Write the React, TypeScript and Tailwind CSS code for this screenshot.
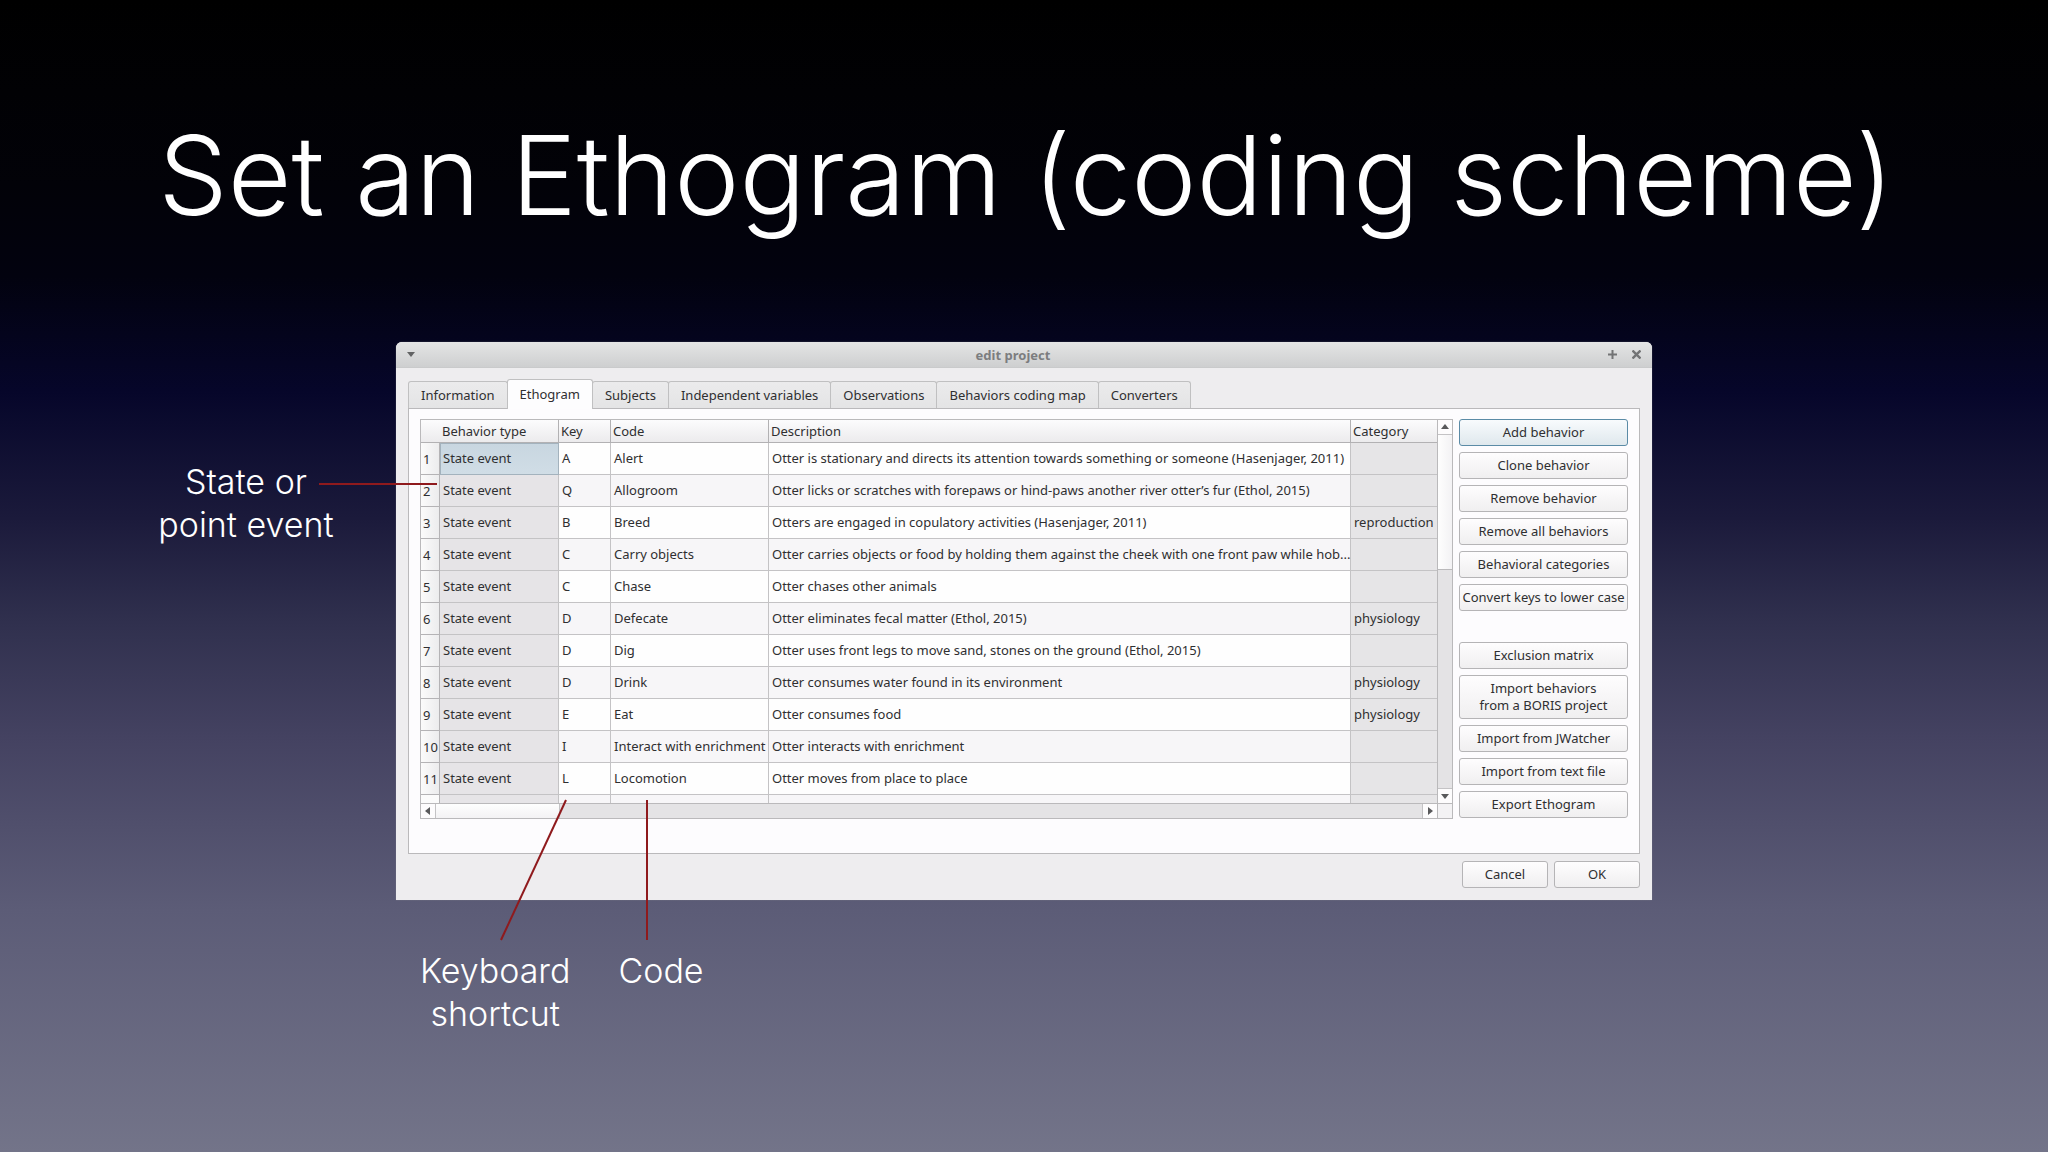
import React from "react";

type Row = { key: string; code: string; description: string; category?: string };

const rows: Row[] = [
  { key: "A", code: "Alert", description: "Otter is stationary and directs its attention towards something or someone (Hasenjager, 2011)" },
  { key: "Q", code: "Allogroom", description: "Otter licks or scratches with forepaws or hind-paws another river otter’s fur (Ethol, 2015)" },
  { key: "B", code: "Breed", description: "Otters are engaged in copulatory activities (Hasenjager, 2011)", category: "reproduction" },
  { key: "C", code: "Carry objects", description: "Otter carries objects or food by holding them against the cheek with one front paw while hob..." },
  { key: "C", code: "Chase", description: "Otter chases other animals" },
  { key: "D", code: "Defecate", description: "Otter eliminates fecal matter (Ethol, 2015)", category: "physiology" },
  { key: "D", code: "Dig", description: "Otter uses front legs to move sand, stones on the ground (Ethol, 2015)" },
  { key: "D", code: "Drink", description: "Otter consumes water found in its environment", category: "physiology" },
  { key: "E", code: "Eat", description: "Otter consumes food", category: "physiology" },
  { key: "I", code: "Interact with enrichment", description: "Otter interacts with enrichment" },
  { key: "L", code: "Locomotion", description: "Otter moves from place to place" },
];

const tabs = ["Information", "Ethogram", "Subjects", "Independent variables", "Observations", "Behaviors coding map", "Converters"];

const editActions = ["Add behavior", "Clone behavior", "Remove behavior", "Remove all behaviors", "Behavioral categories", "Convert keys to lower case"];
const transferActions = ["Exclusion matrix", "Import behaviors\nfrom a BORIS project", "Import from JWatcher", "Import from text file", "Export Ethogram"];

function PushButton({ label, focused = false, className = "" }: { label: string; focused?: boolean; className?: string }) {
  const tone = focused
    ? "border-[#5b8ba6] bg-linear-to-b from-[#f8fbfd] to-[#dfe8ed]"
    : "border-[#b5b4b6] bg-linear-to-b from-[#fefdfe] to-[#f0eff0]";
  return (
    <button
      type="button"
      className={`flex items-center justify-center rounded-[3px] border py-1 text-center leading-[17px] whitespace-pre text-[#2f2f31] ${tone} ${className}`}
    >
      {label}
    </button>
  );
}

function Arrow({ direction }: { direction: "up" | "down" | "left" | "right" }) {
  const points = {
    up: "0,6 4,1 8,6",
    down: "0,2 8,2 4,7",
    left: "6,0 6,8 1,4",
    right: "2,0 7,4 2,8",
  };
  return (
    <svg viewBox="0 0 8 8" className="size-2 fill-[#59595b]" aria-hidden="true">
      <polygon points={points[direction]} />
    </svg>
  );
}

function TitleBar() {
  return (
    <header className="flex h-[26px] items-center justify-between rounded-t-md border-b border-[#c9cacb] bg-linear-to-b from-[#e4e5e5] to-[#cecfd0] px-[11px]">
      <button type="button" aria-label="Window menu" className="flex w-10 items-center">
        <svg viewBox="0 0 8 5" className="h-[5px] w-2 fill-[#626364]" aria-hidden="true">
          <polygon points="0,0 8,0 4,5" />
        </svg>
      </button>
      <h2 className="pr-[22px] font-bold text-[#7c7d7f]">edit project</h2>
      <div className="flex w-10 items-center justify-end gap-[15px]">
        <button type="button" aria-label="Maximize">
          <svg viewBox="0 0 9 9" className="size-[9px]" fill="none" stroke="#737475" strokeWidth="2" aria-hidden="true">
            <path d="M4.500 0V9M0 4.500H9" />
          </svg>
        </button>
        <button type="button" aria-label="Close">
          <svg viewBox="0 0 9 9" className="size-[9px]" fill="none" stroke="#737475" strokeWidth="2.400" aria-hidden="true">
            <path d="M0.500 0.500L8.500 8.500M8.500 0.500L0.500 8.500" />
          </svg>
        </button>
      </div>
    </header>
  );
}

function TabStrip() {
  return (
    <div role="tablist" className="flex items-end">
      {tabs.map((tab, i) =>
        tab === "Ethogram" ? (
          <button
            key={tab}
            type="button"
            role="tab"
            aria-selected="true"
            className="relative z-10 -mb-px -ml-px h-[30px] rounded-t-[3px] border border-b-0 border-[#c0c0c1] bg-[#fdfdfe] px-3 pb-[2px]"
          >
            {tab}
          </button>
        ) : (
          <button
            key={tab}
            type="button"
            role="tab"
            aria-selected="false"
            className={`h-[27px] rounded-t-[3px] border border-b-0 border-[#c0c0c1] bg-linear-to-b from-[#ebebec] to-[#e4e4e5] px-3 ${i > 0 ? "-ml-px" : ""}`}
          >
            {tab}
          </button>
        ),
      )}
    </div>
  );
}

const line = "border-r border-b border-[#c4c3c5]";

function EthogramTable() {
  return (
    <div className="grid min-w-0 flex-1 grid-cols-[minmax(0,1fr)_15px] grid-rows-[383px_15px] border border-[#bab9bb]">
      <div className="overflow-hidden">
        <table className="w-full table-fixed border-separate border-spacing-0 text-left">
          <colgroup>
            <col className="w-[19px]" />
            <col className="w-[119px]" />
            <col className="w-[52px]" />
            <col className="w-[158px]" />
            <col />
            <col className="w-[86px]" />
          </colgroup>
          <thead>
            <tr className="h-[23px] bg-linear-to-b from-[#fcfcfd] to-[#ebeaec]">
              <th className="border-b border-[#b2b1b3]" aria-label="Row" />
              <th className="border-r border-b border-[#b2b1b3] pl-[2px] font-normal">Behavior type</th>
              <th className="border-r border-b border-[#b2b1b3] pl-[2px] font-normal">Key</th>
              <th className="border-r border-b border-[#b2b1b3] pl-[2px] font-normal">Code</th>
              <th className="border-r border-b border-[#b2b1b3] pl-[2px] font-normal">Description</th>
              <th className="border-b border-[#b2b1b3] pl-[2px] font-normal">Category</th>
            </tr>
          </thead>
          <tbody>
            {rows.map((row, i) => (
              <tr key={i} className="h-8 whitespace-nowrap odd:bg-[#fefefe] even:bg-[#f7f6f8]">
                <th scope="row" className="border-r border-b border-[#b4b3b5] bg-linear-to-r from-[#fbfbfb] to-[#ececed] pl-[2px] font-normal">
                  {i + 1}
                </th>
                <td className={`${line} pb-[2px] pl-[3px] ${i === 0 ? "bg-linear-to-b from-[#c8d6e0] to-[#d0dde6] outline -outline-offset-1 outline-[#a3b2bd]" : "bg-[#e6e4e7]"}`}>State event</td>
                <td className={`${line} pb-[2px] pl-[3px]`}>{row.key}</td>
                <td className={`${line} pb-[2px] pl-[3px]`}>{row.code}</td>
                <td className={`${line} pb-[2px] pl-[3px]`}>{row.description}</td>
                <td className="border-b border-[#c4c3c5] bg-[#e6e5e7] pb-[2px] pl-[3px]">{row.category}</td>
              </tr>
            ))}
            <tr className="h-8 bg-[#f7f6f8]">
              <th scope="row" aria-label="12" className="border-r border-[#b4b3b5] bg-[#fbfbfb]" />
              <td className={`${line} bg-[#e6e4e7]`} />
              <td className={line} />
              <td className={line} />
              <td className={line} />
              <td className="bg-[#e6e5e7]" />
            </tr>
          </tbody>
        </table>
      </div>
      <div className="flex flex-col border-l border-[#bab9bb] bg-[#e4e3e5]">
        <button type="button" aria-label="Scroll up" className="flex h-[15px] items-center justify-center border-b border-[#c4c3c5] bg-[#fdfcfd]">
          <Arrow direction="up" />
        </button>
        <div className="h-[135px] border-b border-[#bab9bb] bg-linear-to-r from-[#fefefe] to-[#f3f2f4]" />
        <div className="flex-1" />
        <button type="button" aria-label="Scroll down" className="flex h-[15px] items-center justify-center border-t border-[#c4c3c5] bg-[#fdfcfd]">
          <Arrow direction="down" />
        </button>
      </div>
      <div className="flex border-t border-[#bab9bb] bg-[#e4e3e5]">
        <button type="button" aria-label="Scroll left" className="flex w-[15px] items-center justify-center border-r border-[#c4c3c5] bg-[#fdfcfd]">
          <Arrow direction="left" />
        </button>
        <div className="w-[124px] border-r border-[#c4c3c5] bg-linear-to-b from-[#fefefe] to-[#f3f2f4]" />
        <div className="flex-1" />
        <button type="button" aria-label="Scroll right" className="flex w-[15px] items-center justify-center border-l border-[#c4c3c5] bg-[#fdfcfd]">
          <Arrow direction="right" />
        </button>
      </div>
      <div className="border-t border-l border-[#bab9bb] bg-[#f3f2f4]" />
    </div>
  );
}

function ProjectWindow() {
  return (
    <section
      aria-label="edit project"
      className="rounded-t-md bg-[#eeedef] text-[13px] leading-[18px] font-normal text-[#2f2f31] shadow-[0_0_1px_#a0a0a2] [font-family:'Noto_Sans',sans-serif]"
    >
      <TitleBar />
      <div className="px-3 pt-[11px] pb-3">
        <TabStrip />
        <div role="tabpanel" className="flex items-start gap-1.5 border border-[#bab9bb] bg-[#fdfcfe] pt-2.5 pr-[11px] pb-[34px] pl-[11px]">
          <EthogramTable />
          <div className="flex w-[169px] flex-col gap-1.5">
            {editActions.map((label) => (
              <PushButton key={label} label={label} focused={label === "Add behavior"} />
            ))}
            <div className="h-[19px]" />
            {transferActions.map((label) => (
              <PushButton key={label} label={label} />
            ))}
          </div>
        </div>
        <footer className="flex justify-end gap-1.5 pt-[7px]">
          <PushButton label="Cancel" className="w-[86px]" />
          <PushButton label="OK" className="w-[86px]" />
        </footer>
      </div>
    </section>
  );
}

export default function App() {
  return (
    <main className="min-h-screen overflow-hidden bg-[linear-gradient(to_bottom,#000000_0%,#020208_16%,#02020f_24%,#06062a_34%,#1b1a3b_45%,#30304e_54%,#444261_64%,#5c5c77_79%,#737489_100%)] text-white [font-family:Inter,sans-serif]">
      <h1 className="pt-[107px] pl-1 text-center text-[110px] leading-[136px] font-light whitespace-nowrap">Set an Ethogram (coding scheme)</h1>
      <div className="mt-[99px] grid grid-cols-[1fr_minmax(0,1256px)_1fr] text-[34px] leading-[43px] font-light">
        <p className="pt-[118px] pl-24 text-center">
          State or
          <br />
          point event
        </p>
        <div className="relative">
          <ProjectWindow />
          <div className="flex items-start gap-12 pt-[49px] pl-6">
            <p className="text-center">
              Keyboard
              <br />
              shortcut
            </p>
            <p>Code</p>
          </div>
          <svg className="pointer-events-none absolute top-0 left-0 h-full w-full overflow-visible" stroke="#8f1a1d" strokeWidth="2" aria-hidden="true">
            <line x1="-77" y1="142" x2="41" y2="142" />
            <line x1="170" y1="458" x2="105" y2="598" />
            <line x1="251" y1="458" x2="251" y2="598" />
          </svg>
        </div>
      </div>
    </main>
  );
}
